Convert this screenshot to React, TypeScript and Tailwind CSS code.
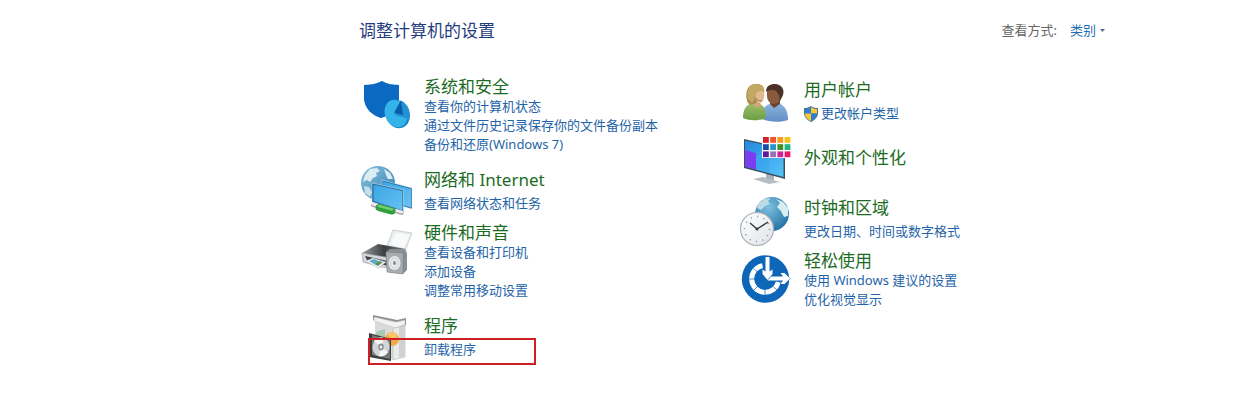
import React from 'react';

const SecurityIcon = () => (
  <svg viewBox="0 0 54 50" className="w-full h-full">
    <path d="M23 2C17 5 11 6 5 6V20C6 30 13 36 22 39C33 36 40 29 40 20V6C34 6 28 5 23 2Z" fill="#0a6fcb" />
    <path d="M23 2C17 5 11 6 5 6V20C6 30 13 36 22 39L40 20V6C34 6 28 5 23 2Z" fill="#0c63b8" opacity="0.5" />
    <ellipse cx="38.5" cy="35" rx="12" ry="14.5" fill="#1a86c8" transform="rotate(-22 38.5 35)" />
    <ellipse cx="37" cy="34.5" rx="11" ry="14" fill="#34b3ea" transform="rotate(-22 37 34.5)" />
    <path d="M36 36L43 22C49 26 52 32 50 40Z" fill="#2190d4" />
    <path d="M35 34L42 21L44 36Z" fill="#0b5cab" />
  </svg>
);

const NetworkIcon = () => (
  <svg viewBox="0 0 54 50" className="w-full h-full">
    <defs>
      <linearGradient id="netGlobe" x1="0" y1="0" x2="1" y2="1">
        <stop offset="0" stopColor="#8fc3de" />
        <stop offset="1" stopColor="#2b7fb0" />
      </linearGradient>
      <linearGradient id="netScreen" x1="0" y1="0" x2="1" y2="1">
        <stop offset="0" stopColor="#3aa5e4" />
        <stop offset="1" stopColor="#68c2f2" />
      </linearGradient>
    </defs>
    <circle cx="19" cy="17" r="17" fill="url(#netGlobe)" />
    <path d="M6 9L11 3L18 2L21 5L17 7L18 10L14 12L11 16L8 14L4 16Z" fill="#dcedf3" />
    <path d="M25 3L31 7L34 13L29 13L27 9Z" fill="#dcedf3" />
    <path d="M5 20L10 21L13 26L11 31L6 27Z" fill="#c6dfe9" />
    <path d="M23 14L53 22V43L23 34Z" fill="#1e6ea8" stroke="#e6f2f8" strokeWidth="0.5" />
    <path d="M24 15.5L52 23V41.5L24 33Z" fill="url(#netScreen)" />
    <path d="M13 17L44.5 24V46L13 36Z" fill="#1d5f92" stroke="#eef6fa" strokeWidth="0.5" />
    <path d="M14.5 18.5L43.5 25V44.5L14.5 35Z" fill="url(#netScreen)" />
    <path d="M14 39L43 47" stroke="#b9aebc" strokeWidth="4" strokeLinecap="round" />
    <path d="M14 38L43 46" stroke="#f1ecf2" strokeWidth="2.5" strokeLinecap="round" />
    <path d="M20 41.5L33 45" stroke="#2f9e3d" strokeWidth="7" strokeLinecap="round" />
    <path d="M20 40L33 43.5" stroke="#72cc72" strokeWidth="2.5" strokeLinecap="round" />
  </svg>
);

const HardwareIcon = () => (
  <svg viewBox="0 0 54 50" className="w-full h-full">
    <defs>
      <linearGradient id="printerTop" x1="0" y1="0" x2="1" y2="0">
        <stop offset="0" stopColor="#9a9c9f" />
        <stop offset="0.5" stopColor="#3d3f42" />
        <stop offset="1" stopColor="#77797c" />
      </linearGradient>
    </defs>
    <path d="M34 5L53 8L46 26L28 21Z" fill="#eceff1" stroke="#b9bec2" strokeWidth="0.7" />
    <path d="M37 8L50 10L45 23L32 19Z" fill="#f9fafa" />
    <path d="M3 28L19 19L47 24L32 34Z" fill="url(#printerTop)" />
    <path d="M3 28L32 33V43L22 42L4 37Z" fill="#d5d7da" stroke="#919599" strokeWidth="0.6" />
    <path d="M6 31L29 36V41L8 35Z" fill="#3c4046" />
    <path d="M7 36L14 33L27 37L19 43Z" fill="#f5f8fa" stroke="#a7b2ba" strokeWidth="0.5" />
    <path d="M10 36L15 34L20 36L15 39Z" fill="#5aa9c9" />
    <path d="M15 39L20 36L24 37L19 41Z" fill="#5e8f62" />
    <path d="M27 27L31 24H46L48 28V45L44 49L28 47Z" fill="#8a8f93" />
    <path d="M27 27L44 28V49L28 47Z" fill="#a9adb0" stroke="#797e82" strokeWidth="0.5" />
    <ellipse cx="35.5" cy="38" rx="6.5" ry="7.5" fill="#e8eaeb" stroke="#9a9fa3" strokeWidth="0.8" />
    <ellipse cx="35.5" cy="38" rx="4" ry="5" fill="none" stroke="#c3c7ca" strokeWidth="0.8" />
    <ellipse cx="35.5" cy="38" rx="1.5" ry="2" fill="#878c90" />
  </svg>
);

const ProgramsIcon = () => (
  <svg viewBox="0 0 54 50" className="w-full h-full">
    <path d="M16 9L34 16V48L16 42Z" fill="#d9dadb" />
    <path d="M34 16L46 11V45L34 48Z" fill="#e9eaea" stroke="#b9bbbd" strokeWidth="0.6" />
    <path d="M40 15L46 12V45L40 46Z" fill="#cfd1d2" />
    <path d="M14 3L38 8L47 6V13L36 16L14 8Z" fill="#8d8f92" />
    <path d="M15 5L37 10L46 8V13L36 16L15 9Z" fill="#f2f2f2" stroke="#b2b4b6" strokeWidth="0.5" />
    <path d="M17 20L26 17V26L17 25Z" fill="#a8c9b0" />
    <circle cx="33" cy="27" r="7" fill="#f5a945" />
    <path d="M28 22C31 19 37 20 39 24L33 27Z" fill="#fbc46f" />
    <path d="M10 21L32 27V49L10 45Z" fill="#3a3c3e" />
    <path d="M13 23L31 28V47L13 43Z" fill="#77797b" />
    <ellipse cx="22" cy="35" rx="8.5" ry="9.5" fill="#d3d5d6" transform="rotate(12 22 35)" />
    <path d="M22 35L15 29C18 25 23 25 25 26Z" fill="#f7f7f7" />
    <path d="M22 35L29 40C27 44 23 45 20 44Z" fill="#f4f5f5" />
    <ellipse cx="22" cy="35" rx="2.8" ry="3.4" fill="#8e9193" />
    <ellipse cx="22" cy="35" rx="1.3" ry="1.6" fill="#f0f0f0" />
  </svg>
);

const UsersIcon = () => (
  <svg viewBox="0 0 54 50" className="w-full h-full">
    <defs>
      <linearGradient id="manShirt" x1="0" y1="0" x2="0" y2="1">
        <stop offset="0" stopColor="#8fb4dc" />
        <stop offset="1" stopColor="#5f8fc6" />
      </linearGradient>
      <linearGradient id="womanShirt" x1="0" y1="0" x2="0" y2="1">
        <stop offset="0" stopColor="#9cc06a" />
        <stop offset="1" stopColor="#6c9d45" />
      </linearGradient>
    </defs>
    <path d="M23 43C22 34 25 30 31 28L40 27C46 30 49 35 49 44C41 47 30 46 23 43Z" fill="url(#manShirt)" />
    <path d="M31 23H41V28L35 32L31 28Z" fill="#6d4329" />
    <path d="M28 15C28 10 32 8 37 9C42 10 44 15 42 20C41 25 38 28 34 28C30 27 28 24 28 19Z" fill="#8a5a3c" />
    <path d="M27 16C27 10 31 8 36 8C42 8 46 13 44 19L41 25C40 23 41 20 39 18C38 14 34 13 28 15Z" fill="#4a3227" />
    <path d="M4 42C4 33 7 29 13 27L21 28C25 30 27 34 27 42C20 45 11 45 4 42Z" fill="url(#womanShirt)" />
    <path d="M12 24H20L22 29L18 32L13 28Z" fill="#d3a67b" />
    <path d="M9 27C6 21 6 8 17 8C24 8 26 12 25 17L22 21L17 27L12 29Z" fill="#a98b4e" />
    <path d="M16 15C19 12 24 13 25 17C26 22 24 27 20 27C17 26 15 21 16 15Z" fill="#e3ba92" />
    <path d="M9 23C7 13 11 8 18 8C23 8 26 11 25 16C21 14 18 15 17 19C16 22 15 24 13 27Z" fill="#c4a965" />
    <path d="M16 21L18 24L23 25" fill="none" stroke="#665d50" strokeWidth="0.6" />
  </svg>
);

const PersonalizationIcon = () => {
  const swatches = [
    ['#d91c2a', '#f0562a', '#f59a1c', '#f8c01d'],
    ['#174fa8', '#2596c8', '#3e8f25', '#22b583'],
    ['#5b1b9c', '#9473b8', '#d1219a', '#e6186a'],
  ];
  return (
    <svg viewBox="0 0 54 50" className="w-full h-full overflow-visible">
      <defs>
        <linearGradient id="screen" x1="0" y1="0" x2="1" y2="1">
          <stop offset="0" stopColor="#2387dd" />
          <stop offset="1" stopColor="#58c5fa" />
        </linearGradient>
      </defs>
      <path d="M27 39L35 41V48H27Z" fill="#a9b1b7" />
      <path d="M14 47L24 45L41 50L30 52Z" fill="#b8bfc4" />
      <path d="M5 7L46 16V47L5 36Z" fill="#3c4e5c" />
      <path d="M6 8.5L44.5 17V45L6 34.5Z" fill="url(#screen)" />
      <path d="M6 18L17 21V37.5L6 34.5Z" fill="#7a3df0" />
      <path d="M17 24L30 18V41L17 37.5Z" fill="#3ba7ef" opacity="0.7" />
      <path d="M23 3H53V26H23Z" fill="#fff" />
      {swatches.map((row, y) =>
        row.map((color, x) => (
          <rect key={color} x={24 + x * 7.2} y={5 + y * 7.2} width="5.8" height="5.8" fill={color} />
        ))
      )}
    </svg>
  );
};

const ClockIcon = () => (
  <svg viewBox="0 0 54 50" className="w-full h-full overflow-visible">
    <defs>
      <radialGradient id="clockGlobe" cx="0.4" cy="0.3" r="0.7">
        <stop offset="0" stopColor="#7dc0e0" />
        <stop offset="1" stopColor="#2775a5" />
      </radialGradient>
      <linearGradient id="clockFace" x1="0" y1="0" x2="1" y2="1">
        <stop offset="0" stopColor="#ffffff" />
        <stop offset="1" stopColor="#dfe3e8" />
      </linearGradient>
    </defs>
    <circle cx="33" cy="20" r="17" fill="url(#clockGlobe)" />
    <path d="M19 10L25 5L32 4L29 7L31 10L26 12L22 16L18 14Z" fill="#bddbe6" />
    <path d="M37 5L44 8L49 14L49 22L45 23L42 17L38 13L41 9Z" fill="#d9edf3" />
    <circle cx="18" cy="35" r="16.5" fill="url(#clockFace)" stroke="#a9afb5" strokeWidth="1.2" />
    <circle cx="18" cy="35" r="12.5" fill="none" stroke="#767c83" strokeWidth="1.6" strokeDasharray="0.8 5.745" />
    <path d="M11 29L18 35L29 28" fill="none" stroke="#33383e" strokeWidth="1.4" />
    <circle cx="18" cy="35" r="1.5" fill="#33383e" />
  </svg>
);

const EaseIcon = () => (
  <svg viewBox="0 0 54 50" className="w-full h-full overflow-visible">
    <circle cx="26.5" cy="26" r="23.7" fill="#0d66b8" />
    <path d="M23.5 12.6A13.5 13.5 0 1 0 39.3 29" fill="none" stroke="#fff" strokeWidth="5" />
    <path d="M9 26H16M14.5 15.5L19 19.5M15 37L19 33M26 43V36M38 37L33.5 33" stroke="#0d66b8" strokeWidth="0.7" />
    <path
      d="M26.5 4H30.5V18.5L33.5 16.500V21L28.5 27L23.5 21V16.5L26.5 18.5Z"
      fill="#fff"
      stroke="#0d66b8"
      strokeWidth="0.8"
      paintOrder="stroke"
    />
    <path
      d="M28.500 27.500L32 23.500H44L41.500 20H45.500L51 25.500L45.500 31H41.500L44 27.500Z"
      fill="#fff"
      stroke="#0d66b8"
      strokeWidth="0.8"
      paintOrder="stroke"
    />
  </svg>
);

const UacShield = () => (
  <svg viewBox="0 0 14 16" className="w-[14px] h-4 shrink-0" aria-hidden="true">
    <path d="M7 0C5 1.5 3 2 0 2V7C0 11 3 14 7 16C11 14 14 11 14 7V2C11 2 9 1.5 7 0Z" fill="#4c7191" />
    <path d="M7 1C5 2.5 3 3 1 3V7.5H7Z" fill="#2e7fd0" />
    <path d="M7 1C9 2.5 11 3 13 3V7.5H7Z" fill="#f9c733" />
    <path d="M1 7.5H7V15C3.5 13.5 1 11 1 7.5Z" fill="#f9c733" />
    <path d="M13 7.5H7V15C10.5 13.5 13 11 13 7.5Z" fill="#2e7fd0" />
  </svg>
);

interface Category {
  title: string;
  icon: React.ReactNode;
  links: string[];
  shield?: boolean;
  highlighted?: boolean;
}

const leftCategories: Category[] = [
  {
    title: '系统和安全',
    icon: <SecurityIcon />,
    links: ['查看你的计算机状态', '通过文件历史记录保存你的文件备份副本', '备份和还原(Windows 7)'],
  },
  { title: '网络和 Internet', icon: <NetworkIcon />, links: ['查看网络状态和任务'] },
  {
    title: '硬件和声音',
    icon: <HardwareIcon />,
    links: ['查看设备和打印机', '添加设备', '调整常用移动设置'],
  },
  { title: '程序', icon: <ProgramsIcon />, links: ['卸载程序'], highlighted: true },
];

const rightCategories: Category[] = [
  { title: '用户帐户', icon: <UsersIcon />, links: ['更改帐户类型'], shield: true },
  { title: '外观和个性化', icon: <PersonalizationIcon />, links: [] },
  { title: '时钟和区域', icon: <ClockIcon />, links: ['更改日期、时间或数字格式'] },
  { title: '轻松使用', icon: <EaseIcon />, links: ['使用 Windows 建议的设置', '优化视觉显示'] },
];

const CategoryItem: React.FC<{ category: Category }> = ({ category }) => {
  const { title, icon, links, shield, highlighted } = category;
  const tall = links.length > 1;

  return (
    <section
      className={`relative flex gap-[11px] min-h-[50px] ${
        tall ? 'items-start' : 'items-center'
      } ${links.length === 1 ? '' : 'mb-[6px]'}`}
    >
      <div className={`w-[54px] h-[50px] shrink-0 ${tall ? 'mt-[3px]' : ''}`}>{icon}</div>
      <div>
        <h2 className="text-[17px] leading-[21px] text-[#1b6b1f]">
          <a href="#" className="hover:underline">{title}</a>
        </h2>
        {links.length > 0 && (
          <ul className={tall ? '' : 'mt-1'}>
            {links.map((link) => (
              <li key={link} className="text-[13px] leading-[19px] text-[#1f64a8]">
                <a href="#" className="flex items-center gap-[3px] hover:underline">
                  {shield && <UacShield />}
                  {link}
                </a>
              </li>
            ))}
          </ul>
        )}
      </div>
      {/* Callout around the uninstall link */}
      {highlighted && (
        <div className="absolute left-[9px] top-[26px] w-[168px] h-[27px] border-2 border-[#cf1f26]" />
      )}
    </section>
  );
};

const App: React.FC = () => {
  return (
    <main className="bg-white min-h-screen pl-[359px] pr-[141px] pt-5 font-['Noto_Sans','Noto_Sans_CJK_SC',sans-serif]">
      <header className="flex items-center justify-between mb-[35px]">
        <h1 className="text-[17px] leading-[21px] text-[#1f3c80]">调整计算机的设置</h1>
        <div className="flex items-center text-[13px] leading-[19px]">
          <label htmlFor="view-by" className="text-[#666] mr-[13px]">查看方式:</label>
          <select id="view-by" className="appearance-none bg-transparent w-[27px] h-[19px] text-[#1f6fb8]">
            <option>类别</option>
          </select>
          <svg viewBox="0 0 5 3" className="w-[5px] h-[3px] ml-[3px]" aria-hidden="true">
            <path d="M0 0H5L2.5 3Z" fill="#4a6f94" />
          </svg>
        </div>
      </header>

      <div className="grid grid-cols-2 gap-x-[14px]">
        <div className="flex flex-col gap-[6px]">
          {leftCategories.map((category) => (
            <CategoryItem key={category.title} category={category} />
          ))}
        </div>
        <div className="flex flex-col gap-[6px]">
          {rightCategories.map((category) => (
            <CategoryItem key={category.title} category={category} />
          ))}
        </div>
      </div>
    </main>
  );
};

export default App;
